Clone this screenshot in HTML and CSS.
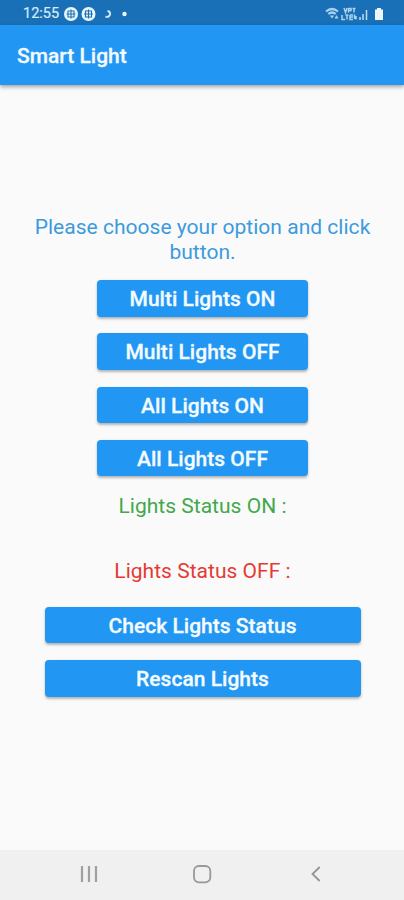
FILE: index.html
```html
<!DOCTYPE html>
<html lang="en">
<head>
<meta charset="utf-8">
<title>Smart Light</title>
<link rel="stylesheet" href="styles.css">
</head>
<body>
<div class="status">
  <span class="time">12:55</span>
  <svg class="notes" width="68" height="16" viewBox="0 0 68 16">
    <g fill="#eaf6fc"><circle cx="7" cy="8" r="7"/><circle cx="24.500" cy="8" r="7"/></g>
    <g fill="none" stroke="#1b70b5" stroke-width="1.100"><path d="M7 3.500v9M2.500 8h9M4 5h6v6h-6zM24.500 3.500v9M20 8h9M21.500 5h6v6h-6z"/></g>
    <path d="M43.500 5q3 .5 2.500 3.500q-.8 3-4.500 2.200" fill="none" stroke="#d8ecf8" stroke-width="1.900"/>
    <circle cx="60.500" cy="8" r="2.200" fill="#eef8fd"/>
  </svg>
  <svg class="signals" width="60" height="16" viewBox="0 0 60 16">
    <g fill="none" stroke="#a9d3ee" stroke-width="2.200"><path d="M1 5.500q6-5 12 0M3.300 8q3.700-3 7.400 0"/></g>
    <path d="M4.800 9.500h4.400l-2.200 3zM9.500 12.500l2-3.500 2 3.500z" fill="#a9d3ee"/>
    <g fill="none" stroke="#a9d3ee" stroke-width="1.500"><path d="M19 2l1.500 4.500L22 2M23.500 2v4.500M23.500 2.500h2.500v2h-2.500M27.500 2.500h3M29 2v4.500M17 9v4.500h3M20.500 9h3M22 9v4.500M25 9v4.500h3M25 9h3M25 11h3M29.500 13V8.500M31 10v3.500"/></g>
    <path d="M34 11h2v3h-2zM37 8h2v6h-2z" fill="#8fc2e4"/>
    <path d="M41.500 4v10" stroke="#b9dcf2" stroke-width="1.500"/>
    <path d="M52 2h4v1.500h2v10.500h-8V3.500h2z" fill="#eaf6fc"/>
  </svg>
</div>
<header class="appbar"><h1>Smart Light</h1></header>
<main>
  <p class="prompt">Please choose your option and click button.</p>
  <div class="group">
    <button>Multi Lights ON</button>
    <button>Multi Lights OFF</button>
    <button>All Lights ON</button>
    <button>All Lights OFF</button>
  </div>
  <p class="on">Lights Status ON :</p>
  <p class="off">Lights Status OFF :</p>
  <div class="group wide">
    <button>Check Lights Status</button>
    <button>Rescan Lights</button>
  </div>
</main>
<nav>
  <svg width="18" height="18" viewBox="0 0 18 18"><path d="M2 1v16M9 1v16M16 1v16" stroke="#a0a0a0" stroke-width="2.200"/></svg>
  <svg class="home" width="20" height="20" viewBox="0 0 20 20"><rect x="2" y="2" width="16.300" height="16.300" rx="5" fill="none" stroke="#989898" stroke-width="1.800"/></svg>
  <svg width="12" height="18" viewBox="0 0 12 18"><path d="M9.700 2L2.500 9l7.200 7" fill="none" stroke="#949494" stroke-width="1.800"/></svg>
</nav>
</body>
</html>
```
FILE: styles.css
```css
* { box-sizing: border-box; }
body {
  margin: 0;
  width: 404px;
  height: 900px;
  display: flex;
  flex-direction: column;
  background: #fafafa;
  font-family: Roboto, sans-serif;
  overflow: hidden;
}
.status {
  height: 25px;
  flex: none;
  display: flex;
  align-items: center;
  padding: 2px 19px 0 23px;
  background: #1a70b6;
}
.time { width: 41px; font-size: 14.5px; color: #d8ecf8; -webkit-text-stroke: .2px #d8ecf8; }
.signals { margin-left: auto; }
.appbar {
  height: 60px;
  flex: none;
  display: flex;
  align-items: center;
  padding: 2px 17px 0;
  background: #2196f3;
  box-shadow: 0 2px 4px rgba(0, 0, 0, .35);
}
h1 { margin: 0; font-size: 21px; font-weight: 500; color: #f2faff; -webkit-text-stroke: .3px #f2faff; }
main {
  flex: 1;
  display: flex;
  flex-direction: column;
  align-items: center;
  padding: 130px 17px 0 18px;
}
p { margin: 0; font-size: 21px; line-height: 25px; letter-spacing: .02px; text-align: center; }
.prompt { color: #3c9ade; margin-bottom: 15px; }
.group { width: 211px; display: grid; gap: 16.8px; }
.wide { width: 316px; }
button {
  height: 36.5px;
  padding: 0;
  border: 0;
  border-radius: 4px;
  background: #2196f3;
  color: #f4fbff;
  font: 500 21px/38px Roboto, sans-serif;
  letter-spacing: .02px;
  -webkit-text-stroke: .3px #f4fbff;
  box-shadow: 0 1.5px 2.500px rgba(0, 0, 0, .28);
}
.on { color: #43a84b; margin: 17.600px 0 40px; }
.off { color: #e53a32; margin-bottom: 22.800px; }
nav {
  height: 50px;
  flex: none;
  display: flex;
  align-items: center;
  justify-content: space-between;
  padding: 0 82px 2px 80px;
  background: #f0f0f0;
}
.home { margin-right: 4px; }
```
